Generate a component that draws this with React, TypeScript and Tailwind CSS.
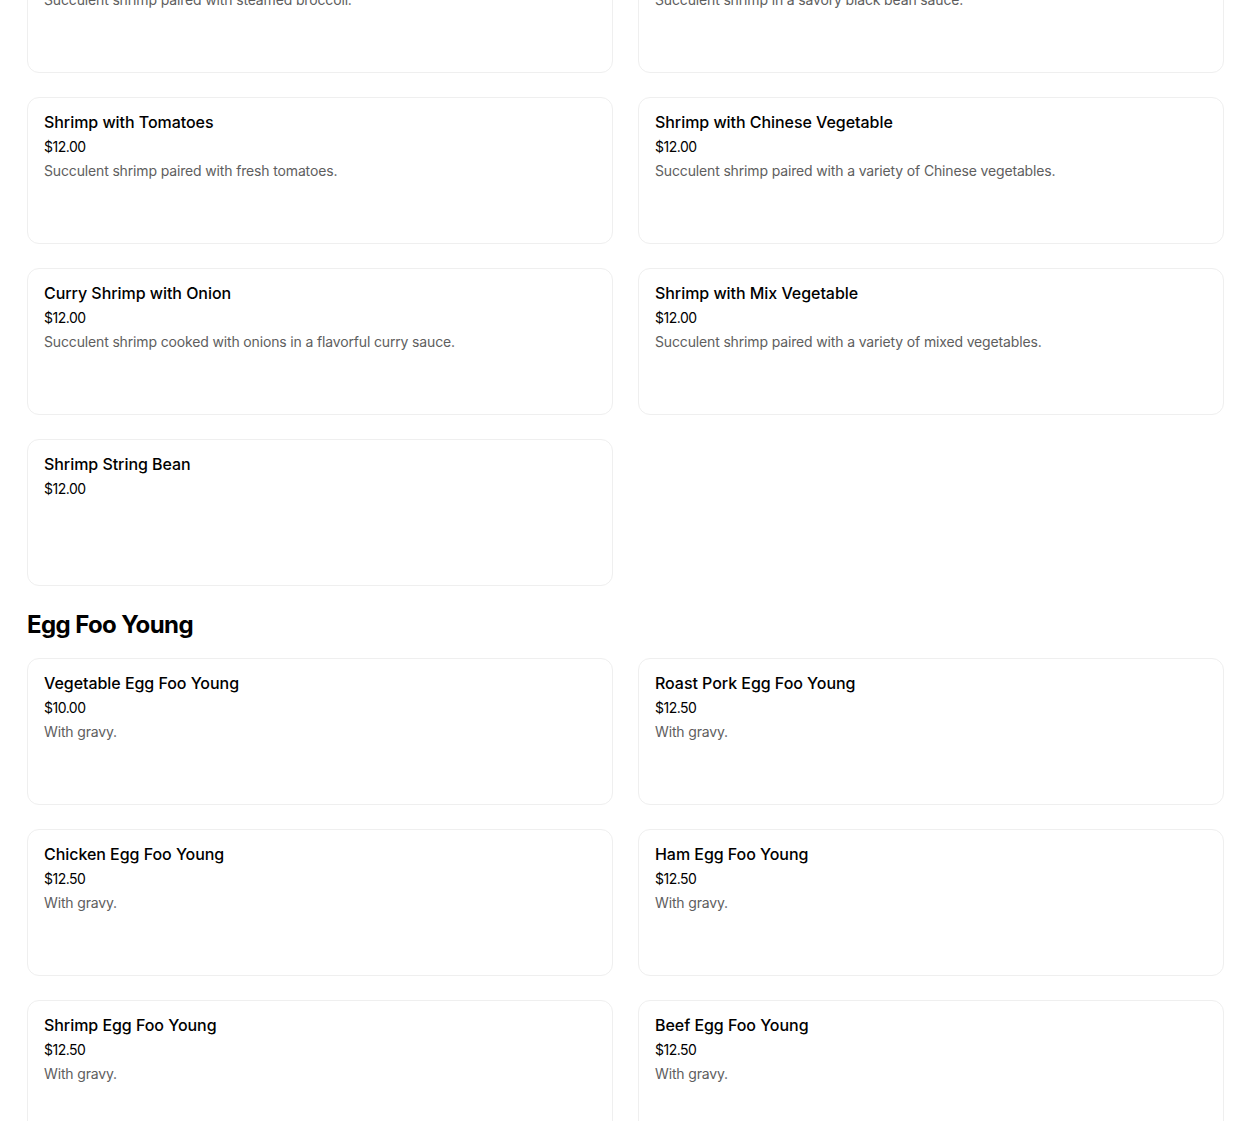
type Item = { name: string; price: string; desc?: string };

const shrimp: Item[] = [
  { name: "Shrimp with Broccoli", price: "$12.00", desc: "Succulent shrimp paired with steamed broccoli." },
  { name: "Shrimp with Black Bean Sauce", price: "$12.00", desc: "Succulent shrimp in a savory black bean sauce." },
  { name: "Shrimp with Tomatoes", price: "$12.00", desc: "Succulent shrimp paired with fresh tomatoes." },
  { name: "Shrimp with Chinese Vegetable", price: "$12.00", desc: "Succulent shrimp paired with a variety of Chinese vegetables." },
  { name: "Curry Shrimp with Onion", price: "$12.00", desc: "Succulent shrimp cooked with onions in a flavorful curry sauce." },
  { name: "Shrimp with Mix Vegetable", price: "$12.00", desc: "Succulent shrimp paired with a variety of mixed vegetables." },
  { name: "Shrimp String Bean", price: "$12.00" },
];

const eggFooYoung: Item[] = [
  { name: "Vegetable Egg Foo Young", price: "$10.00", desc: "With gravy." },
  { name: "Roast Pork Egg Foo Young", price: "$12.50", desc: "With gravy." },
  { name: "Chicken Egg Foo Young", price: "$12.50", desc: "With gravy." },
  { name: "Ham Egg Foo Young", price: "$12.50", desc: "With gravy." },
  { name: "Shrimp Egg Foo Young", price: "$12.50", desc: "With gravy." },
  { name: "Beef Egg Foo Young", price: "$12.50", desc: "With gravy." },
];

function MenuCard({ item }: { item: Item }) {
  return (
    <div className="h-[147px] rounded-xl border border-[#efefef] bg-white px-4 pt-[14px]">
      <h3 className="text-base leading-5 font-medium text-black tracking-[-0.05px]">{item.name}</h3>
      <p className="mt-[5px] text-sm leading-5 text-black tracking-[-0.5px]">{item.price}</p>
      {item.desc && (
        <p className="mt-1 text-sm leading-5 text-[#5e5e5e] tracking-[-0.15px]">{item.desc}</p>
      )}
    </div>
  );
}

export default function App() {
  return (
    <main className="min-h-screen bg-white pl-[27px] pr-[26px] font-['Inter',sans-serif] overflow-hidden">
      <div className="-mt-[74px] grid grid-cols-2 gap-x-[25px] gap-y-6">
        {shrimp.map((item) => (
          <MenuCard key={item.name} item={item} />
        ))}
      </div>
      <h2 className="mt-[21px] mb-[15px] text-2xl leading-9 font-bold text-black tracking-tight">Egg Foo Young</h2>
      <div className="grid grid-cols-2 gap-x-[25px] gap-y-6">
        {eggFooYoung.map((item) => (
          <MenuCard key={item.name} item={item} />
        ))}
      </div>
    </main>
  );
}
